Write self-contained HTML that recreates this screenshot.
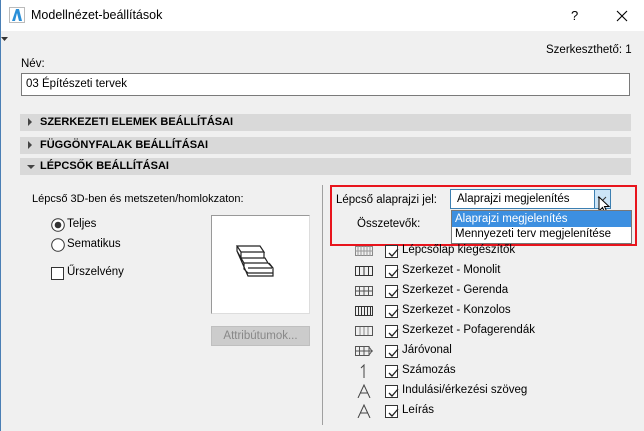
<!DOCTYPE html>
<html><head><meta charset="utf-8"><style>
*{box-sizing:border-box;margin:0;padding:0}
body{width:644px;height:431px;overflow:hidden;background:#f0f0f0;font-family:"Liberation Sans","DejaVu Sans",sans-serif;font-size:11.5px;color:#000;position:relative}
.a{position:absolute;white-space:nowrap}
.bar{position:absolute;left:20px;width:611px;height:17px;background:#d9d9d9;font-weight:bold;font-size:11px;padding-left:20px;line-height:17px}
.bar i{position:absolute;left:8px;top:5px;width:0;height:0}
.cb{position:absolute;width:13px;height:13px;border:1px solid #333;background:#fff}
.row{position:absolute;left:355px;height:16px}
.row .cb{left:30px;top:1px}
.row span{position:absolute;left:47px;top:0;white-space:nowrap}
.ic{position:absolute;left:0;top:2px}
</style></head><body>
<div class="a" style="left:0;top:0;width:644px;height:31px;background:#fff"></div>
<div class="a" style="left:0;top:0;width:1px;height:431px;background:#4a7fb5"></div>
<svg class="a" style="left:9px;top:7px" width="16" height="16"><rect x="0.5" y="0.5" width="15" height="15" fill="#fff" stroke="#bbb"/><path d="M3 14 L7 2 L10 2 L13 14 L10 14 L8 6 L6 14Z" fill="#2a8fd8"/></svg>
<div class="a" style="left:31px;top:8px;font-size:12.5px">Modellnézet-beállítások</div>
<div class="a" style="left:571px;top:8px;font-size:13px">?</div>
<svg class="a" style="left:616px;top:10px" width="12" height="12"><path d="M1 1L11 11M11 1L1 11" stroke="#000" stroke-width="1.1"/></svg>
<svg class="a" style="left:1px;top:37px" width="8" height="5"><path d="M0 0H7L3.5 4Z" fill="#333"/></svg>
<div class="a" style="left:546px;top:44px">Szerkeszthető: 1</div>
<div class="a" style="left:21px;top:58px">Név:</div>
<div class="a" style="left:21px;top:73px;width:609px;height:23px;background:#fff;border:1px solid #7a7a7a;padding:4px 4px">03 Építészeti tervek</div>
<div class="bar" style="top:114px"><i style="border-left:4px solid #444;border-top:4px solid transparent;border-bottom:4px solid transparent;top:4px"></i>SZERKEZETI ELEMEK BEÁLLÍTÁSAI</div>
<div class="bar" style="top:137px"><i style="border-left:4px solid #444;border-top:4px solid transparent;border-bottom:4px solid transparent;top:4px"></i>FÜGGÖNYFALAK BEÁLLÍTÁSAI</div>
<div class="bar" style="top:158px"><i style="border-top:4px solid #444;border-left:4px solid transparent;border-right:4px solid transparent;left:7px;top:7px"></i>LÉPCSŐK BEÁLLÍTÁSAI</div>
<div class="a" style="left:32px;top:193px;font-size:11px">Lépcső 3D-ben és metszeten/homlokzaton:</div>
<svg class="a" style="left:51px;top:218px" width="14" height="14"><circle cx="7" cy="7" r="6.3" fill="#fff" stroke="#333"/><circle cx="7" cy="7" r="3.3" fill="#333"/></svg>
<div class="a" style="left:67px;top:218px">Teljes</div>
<svg class="a" style="left:51px;top:238px" width="14" height="14"><circle cx="7" cy="7" r="6.3" fill="#fff" stroke="#333"/></svg>
<div class="a" style="left:67px;top:238px">Sematikus</div>
<div class="cb" style="left:51px;top:267px"></div>
<div class="a" style="left:67px;top:266px">Űrszelvény</div>
<div class="a" style="left:211px;top:215px;width:99px;height:99px;background:#fff;border:1px solid #999;border-bottom-color:#ddd;border-right-color:#ddd"></div>
<svg class="a" style="left:232px;top:243px" width="60" height="50" fill="none" stroke="#222" stroke-width="1.2"><path d="M5 3H28L32 9H9ZM5 3V8L9 15V9M9 15H33L36 20H12L9 15M32 9V15M12 20V26L16 30H41V25L36 20M16 25H40M41 25L37 20M12 26L16 30M5 8L16 33H41V30"/></svg>
<div class="a" style="left:211px;top:326px;width:99px;height:20px;background:#cccccc;border:1px solid #bfbfbf;color:#888;text-align:center;line-height:18px">Attribútumok...</div>
<div class="a" style="left:322px;top:185px;width:1px;height:240px;background:#a0a0a0"></div>
<div class="a" style="left:336px;top:194px">Lépcső alaprajzi jel:</div>
<div class="a" style="left:450px;top:189px;width:161px;height:20px;background:#fff;border:1px solid #3c7fb1;padding:3px 6px">Alaprajzi megjelenítés</div>
<div class="a" style="left:594px;top:190px;width:16px;height:18px;background:#cce4f7;border-left:1px solid #3c7fb1"></div>
<svg class="a" style="left:597px;top:196px" width="10" height="6"><path d="M1 1L5 5L9 1" stroke="#333" fill="none"/></svg>
<svg class="a" style="left:598px;top:196px" width="14" height="20"><path d="M1 1V15L4.5 11.5L7 17L9 16L6.5 10.5H11Z" fill="#fff" stroke="#000"/></svg>
<div class="a" style="left:451px;top:210px;width:181px;height:34px;background:#fff;border:1px solid #777"></div>
<div class="a" style="left:452px;top:211px;width:179px;height:16px;background:#3c8fe0;color:#fff;padding-left:3px;line-height:16px">Alaprajzi megjelenítés</div>
<div class="a" style="left:455px;top:228px">Mennyezeti terv megjelenítése</div>
<div class="a" style="left:330px;top:185px;width:307px;height:61px;border:2px solid #e8141c"></div>
<div class="a" style="left:357px;top:218px">Összetevők:</div>
<div class="row" style="top:244px"><svg class="ic" width="18" height="10"><rect x="0.5" y="0.5" width="17" height="9" fill="none" stroke="#888"/><path d="M3 0V10M6 0V10M9 0V10M12 0V10M15 0V10M0 5H18" stroke="#999"/></svg><div class="cb"></div><span>Lépcsőlap kiegészítők</span></div>
<div class="row" style="top:264px"><svg class="ic" width="18" height="10"><rect x="0.5" y="0.5" width="17" height="9" fill="none" stroke="#333"/><path d="M4.5 0V10M9 0V10M13.5 0V10" stroke="#333"/></svg><div class="cb"></div><span>Szerkezet - Monolit</span></div>
<div class="row" style="top:284px"><svg class="ic" width="18" height="10"><rect x="0.5" y="0.5" width="17" height="9" fill="none" stroke="#555"/><path d="M4.5 0V10M9 0V10M13.5 0V10M0 5H18" stroke="#555"/></svg><div class="cb"></div><span>Szerkezet - Gerenda</span></div>
<div class="row" style="top:304px"><svg class="ic" width="18" height="10"><rect x="0.5" y="0.5" width="17" height="9" fill="none" stroke="#333"/><path d="M3.5 0V10M6.5 0V10M9.5 0V10M12.5 0V10M15.5 0V10" stroke="#333"/></svg><div class="cb"></div><span>Szerkezet - Konzolos</span></div>
<div class="row" style="top:324px"><svg class="ic" width="18" height="10"><rect x="0.5" y="0.5" width="17" height="9" fill="none" stroke="#555"/><path d="M5 1V9M9 1V9M13 1V9" stroke="#888"/></svg><div class="cb"></div><span>Szerkezet - Pofagerendák</span></div>
<div class="row" style="top:344px"><svg class="ic" width="18" height="10"><path d="M0.5 0.5H14V9.5H0.5ZM4.5 0V10M9 0V10M0 5H18M14 1L17 5L14 9" fill="none" stroke="#555"/></svg><div class="cb"></div><span>Járóvonal</span></div>
<div class="row" style="top:364px"><svg class="ic" style="top:0" width="18" height="14"><path d="M6 4L9 1V14" fill="none" stroke="#444"/></svg><div class="cb"></div><span>Számozás</span></div>
<div class="row" style="top:384px"><svg class="ic" style="top:0" width="18" height="14"><path d="M3 14L9 1L15 14M5 9H13" fill="none" stroke="#444"/></svg><div class="cb"></div><span>Indulási/érkezési szöveg</span></div>
<div class="row" style="top:404px"><svg class="ic" style="top:0" width="18" height="14"><path d="M3 14L9 1L15 14M5 9H13" fill="none" stroke="#444"/></svg><div class="cb"></div><span>Leírás</span></div>
<style>.row .cb{background:#fff url("") no-repeat}</style>
<svg class="a" style="left:0;top:0" width="644" height="431" fill="none" stroke="#222" stroke-width="1.3">
<g transform="translate(387,247)"><path d="M2 6L5 9L11 2"/></g>
<g transform="translate(387,267)"><path d="M2 6L5 9L11 2"/></g>
<g transform="translate(387,287)"><path d="M2 6L5 9L11 2"/></g>
<g transform="translate(387,307)"><path d="M2 6L5 9L11 2"/></g>
<g transform="translate(387,327)"><path d="M2 6L5 9L11 2"/></g>
<g transform="translate(387,347)"><path d="M2 6L5 9L11 2"/></g>
<g transform="translate(387,367)"><path d="M2 6L5 9L11 2"/></g>
<g transform="translate(387,387)"><path d="M2 6L5 9L11 2"/></g>
<g transform="translate(387,407)"><path d="M2 6L5 9L11 2"/></g>
</svg>
</body></html>
